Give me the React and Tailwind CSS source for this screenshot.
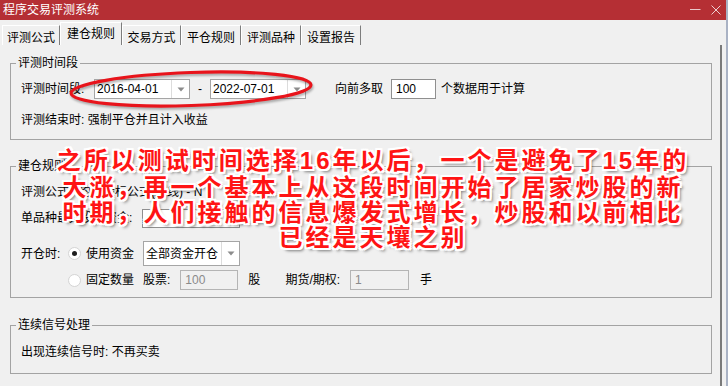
import React from "react";

const ui = "font-['Liberation_Sans','Noto_Sans_CJK_SC',sans-serif]";

const Arrow = () => (
  <svg width="8" height="5" viewBox="0 0 8 5">
    <path d="M0.5 0.5h7L4 4.5z" fill="#8c8c8c" />
  </svg>
);

const Combo = ({ value, className }) => (
  <div className={`flex bg-white border border-[#a5a5a5] ${className}`}>
    <div className="flex-1 flex items-center pl-[2px] text-[12px] leading-none">{value}</div>
    <div className="w-[18px] flex items-center justify-center border-l border-[#dcdcdc]">
      <Arrow />
    </div>
  </div>
);

const Box = ({ value, className, muted }) => (
  <div
    className={`flex items-center pl-[4px] text-[12px] leading-none border ${
      muted ? "bg-[#f0f0f0] border-[#b4b4b4] text-[#8a8a8a]" : "bg-white border-[#8f8f8f]"
    } ${className}`}
  >
    {value}
  </div>
);

const Radio = ({ on }) => (
  <span className="w-[13px] h-[13px] rounded-full border border-[#d4d4d4] bg-white flex items-center justify-center shrink-0">
    {on && <span className="w-[5px] h-[5px] rounded-full bg-[#1e1e1e]" />}
  </span>
);

const Group = ({ title, className, children }) => (
  <fieldset className={`ml-[10px] w-[702px] border border-[#a3a3a3] ${className}`}>
    <legend className="ml-[5px] px-[2px] text-[12px] leading-[16px]">{title}</legend>
    {children}
  </fieldset>
);

const tabs = [
  { label: "评测公式", w: "w-[58px]" },
  { label: "建仓规则", w: "w-[62px]", active: true },
  { label: "交易方式", w: "w-[59px]" },
  { label: "平仓规则", w: "w-[60px]" },
  { label: "评测品种", w: "w-[60px]" },
  { label: "设置报告", w: "w-[60px]" },
];

const Num = ({ children }) => (
  <span className="font-['Liberation_Sans',sans-serif] font-bold">{children}</span>
);

export default function App() {
  return (
    <div className={`relative w-[728px] h-[386px] flex bg-[#f0f0f0] overflow-hidden text-black ${ui}`}>
      <div className="w-[726px] flex flex-col">
        {/* title bar */}
        <div className="h-[20px] bg-[#b52f34] flex items-center justify-between pl-[3px] pr-[5px]">
          <span className="text-white text-[12px] leading-none">程序交易评测系统</span>
          <div className="flex items-center gap-[10px]">
            <svg width="11" height="10" viewBox="0 0 11 10">
              <path d="M0 4.5h10.5" stroke="#e9c9ca" strokeWidth="1" />
            </svg>
            <svg width="10" height="10" viewBox="0 0 10 10">
              <path d="M0.5 0.5l9 9M9.5 0.5l-9 9" stroke="#ecd0d1" strokeWidth="1" />
            </svg>
          </div>
        </div>

        {/* tabs */}
        <div className="h-[25px] flex items-end pl-[2px]">
          {tabs.map((t) => (
            <div
              key={t.label}
              className={`${t.w} flex justify-center pt-[3px] text-[12px] leading-[16px] border-l border-t border-l-white border-t-white border-r border-r-[#7d7d7d] ${
                t.active ? "h-[23px]" : "h-[20px] pt-[4px]"
              }`}
            >
              {t.label}
            </div>
          ))}
        </div>

        {/* body */}
        <div className="flex-1 w-[722px] border-r-2 border-r-[#7a7a7a] flex flex-col text-[12px] leading-[16px]">
          <Group title="评测时间段" className="mt-[10px]">
            <div className="pl-[10px] pt-[8px] pb-[11px]">
              <div className="flex items-center h-[20px]">
                <span className="w-[73px]">评测时间段:</span>
                <Combo value="2016-04-01" className="w-[96px] h-[20px]" />
                <span className="w-[20px] text-center">-</span>
                <Combo value="2022-07-01" className="w-[96px] h-[20px]" />
                <span className="ml-[29px]">向前多取</span>
                <Box value="100" className="ml-[8px] w-[45px] h-[20px]" />
                <span className="ml-[5px]">个数据用于计算</span>
              </div>
              <div className="mt-[13px] h-[16px]">评测结束时: 强制平仓并且计入收益</div>
            </div>
          </Group>

          <Group title="建仓规则" className="mt-[18px]">
            <div className="pl-[10px] pt-[10px] pb-[7px]">
              <div className="h-[16px] whitespace-pre">评测公式:  均线指标公式(日线) - N</div>
              <div className="mt-[8px] flex items-center h-[20px]">
                <span className="w-[121px]">单品种最大投入资金:</span>
                <Box value="" className="w-[98px] h-[19px]" />
              </div>
              <div className="mt-[13px] flex items-center h-[25px]">
                <span className="w-[47px]">开仓时:</span>
                <Radio on />
                <span className="ml-[5px]">使用资金</span>
                <Combo value="全部资金开仓" className="ml-[9px] w-[97px] h-[25px]" />
              </div>
              <div className="mt-[4px] flex items-center h-[20px]">
                <span className="w-[47px]" />
                <Radio />
                <span className="ml-[5px]">固定数量</span>
                <span className="ml-[9px]">股票:</span>
                <Box value="100" muted className="ml-[10px] w-[58px] h-[20px]" />
                <span className="ml-[10px]">股</span>
                <span className="ml-[25px]">期货/期权:</span>
                <Box value="1" muted className="ml-[10px] w-[59px] h-[20px]" />
                <span className="ml-[11px]">手</span>
              </div>
            </div>
          </Group>

          <Group title="连续信号处理" className="mt-[19px]">
            <div className="pl-[10px] pt-[11px] pb-[13px]">
              <div className="h-[16px]">出现连续信号时: 不再买卖</div>
            </div>
          </Group>
        </div>
      </div>
      <div className="w-[2px] bg-[#a9b2c4]" />

      {/* annotation ellipse */}
      <svg
        className="absolute left-[66px] top-[68px] drop-shadow-[1px_2px_1px_rgba(0,0,0,0.3)]"
        width="252"
        height="44"
        viewBox="0 0 252 44"
      >
        <ellipse
          cx="125"
          cy="21"
          rx="120"
          ry="16.5"
          transform="rotate(-2 125 21)"
          fill="none"
          stroke="#e8141b"
          strokeWidth="3.2"
        />
      </svg>

      {/* annotation text */}
      <div className="absolute left-[48px] top-[146px] w-[650px] text-center text-[24px] leading-[25px] tracking-[3px] font-bold text-[#ff1414] font-['Noto_Sans_CJK_SC',sans-serif] whitespace-nowrap [text-shadow:-2px_-2px_0_#fff,2px_-2px_0_#fff,-2px_2px_0_#fff,2px_2px_0_#fff,0_-2px_0_#fff,0_2px_0_#fff,-2px_0_0_#fff,2px_0_0_#fff,3px_3px_3px_rgba(0,0,0,0.5)]">
        <div>
          之所以测试时间选择<Num>16</Num>年以后，一个是避免了<Num>15</Num>年的
        </div>
        <div>大涨，再一个基本上从这段时间开始了居家炒股的新</div>
        <div>时期，人们接触的信息爆发式增长，炒股和以前相比</div>
        <div>已经是天壤之别</div>
      </div>
    </div>
  );
}
